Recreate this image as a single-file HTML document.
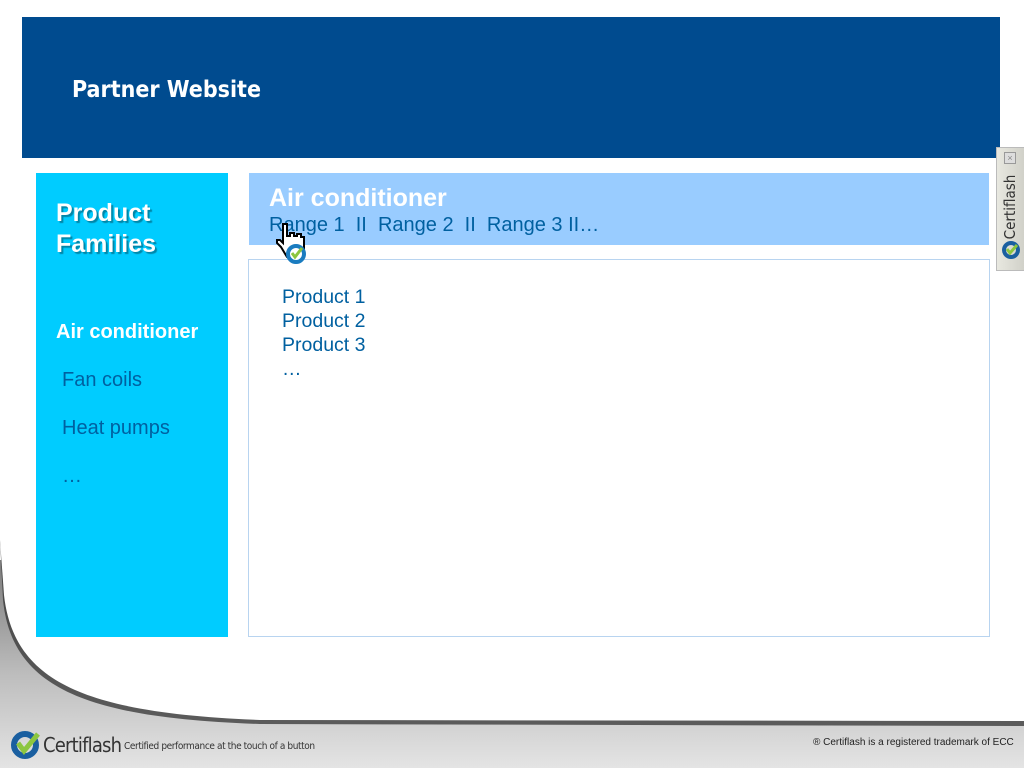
<!DOCTYPE html>
<html><head><style>
body{margin:0;width:1024px;height:768px;position:relative;overflow:hidden;font-family:"Liberation Sans",Arial,sans-serif;background:#fff}
.a{position:absolute}
</style></head><body>
<svg class="a" style="left:0;top:0" width="1024" height="768">
<defs>
<linearGradient id="g" x1="0" y1="0" x2="0" y2="1"><stop offset="0" stop-color="#7a7a7a"/><stop offset="0.55" stop-color="#bdbdbd"/><stop offset="1" stop-color="#e4e4e4"/></linearGradient>
</defs>
<rect x="0" y="560" width="1024" height="208" fill="url(#g)"/>
<path d="M0,540 L3,600 C12,690 90,718 260,724 L1024,726 L1024,540 Z" fill="#333" opacity="0.75"/>
<path d="M0,540 L4,595 C14,685 90,713 260,720 L1024,721 L1024,540 Z" fill="#fff"/>
</svg>
<div class="a" style="left:22px;top:17px;width:978px;height:141px;background:#004B8F"></div>
<div class="a" style="left:72px;top:77px;color:#fff;font-size:23px;font-weight:bold;font-family:'DejaVu Sans Condensed','Liberation Sans',sans-serif">Partner Website</div>
<div class="a" style="left:36px;top:173px;width:192px;height:464px;background:#00CCFF"></div>
<div class="a" style="left:56px;top:198px;color:#fff;font-size:25px;font-weight:bold;line-height:31px;text-shadow:2px 2px 1px rgba(0,0,0,0.35)">Product<br>Families</div>
<div class="a" style="left:56px;top:321px;color:#fff;font-size:20px;font-weight:bold">Air conditioner</div>
<div class="a" style="left:62px;top:369px;color:#0060a0;font-size:20px">Fan coils</div>
<div class="a" style="left:62px;top:417px;color:#0060a0;font-size:20px">Heat pumps</div>
<div class="a" style="left:62px;top:465px;color:#0060a0;font-size:20px">…</div>
<div class="a" style="left:249px;top:173px;width:740px;height:72px;background:#99CCFF"></div>
<div class="a" style="left:269px;top:184px;color:#fff;font-size:25px;font-weight:bold">Air conditioner</div>
<div class="a" style="left:269px;top:214px;color:#0060a0;font-size:20px;white-space:pre">Range 1  II  Range 2  II  Range 3 II…</div>
<div class="a" style="left:248px;top:259px;width:740px;height:376px;border:1px solid #b8d4f0;background:#fff"></div>
<div class="a" style="left:282px;top:285px;color:#0060a0;font-size:19.5px;line-height:24px">Product 1<br>Product 2<br>Product 3<br>…</div>
<svg class="a" style="left:276px;top:220px" width="40" height="50">
<path d="M7,4 h4 v12 h3 v-3 h4 v3 h3 v-2 h4 v3 h3 v12 l-3,8 h-14 l-6,-10 l-4,-4 v-3 h3 l3,3 z" fill="#fff" stroke="#000" stroke-width="2"/>
<circle cx="20" cy="34" r="8" fill="#fff" stroke="#1a7cc0" stroke-width="4"/>
<path d="M16,33 l3,4 l7,-9" fill="none" stroke="#8cc63f" stroke-width="3"/>
</svg>
<div class="a" style="left:996px;top:147px;width:28px;height:122px;background:linear-gradient(90deg,#e8e8e0,#d0d0c8);border:1px solid #bbb"></div>
<div class="a" style="left:1004px;top:152px;width:10px;height:10px;border:1px solid #999;background:#ddd;font-size:9px;line-height:10px;text-align:center;color:#888">×</div>
<div class="a" style="left:970px;top:198px;width:80px;transform:rotate(-90deg);color:#333;font-size:15px;text-align:center;font-family:'DejaVu Sans Condensed',sans-serif">Certiflash</div>
<svg class="a" style="left:1001px;top:240px" width="20" height="20"><circle cx="10" cy="10" r="7" fill="none" stroke="#1a5fa0" stroke-width="4"/><path d="M6,9 l3,4 l7,-8" fill="none" stroke="#8cc63f" stroke-width="3"/></svg>
<svg class="a" style="left:10px;top:728px" width="34" height="32"><circle cx="15" cy="17" r="11" fill="none" stroke="#1a5fa0" stroke-width="6"/><path d="M8,15 l6,8 l14,-17" fill="none" stroke="#8cc63f" stroke-width="5"/></svg>
<div class="a" style="left:43px;top:733px;color:#333;font-size:20px;font-family:'DejaVu Sans Condensed',sans-serif;letter-spacing:-0.8px">Certiflash</div>
<div class="a" style="left:124px;top:741px;color:#333;font-size:10px;font-family:'DejaVu Sans Condensed',sans-serif;letter-spacing:-0.4px">Certified performance at the touch of a button</div>
<div class="a" style="left:813px;top:737px;color:#222;font-size:10px">® Certiflash is a registered trademark of ECC</div>
</body></html>
